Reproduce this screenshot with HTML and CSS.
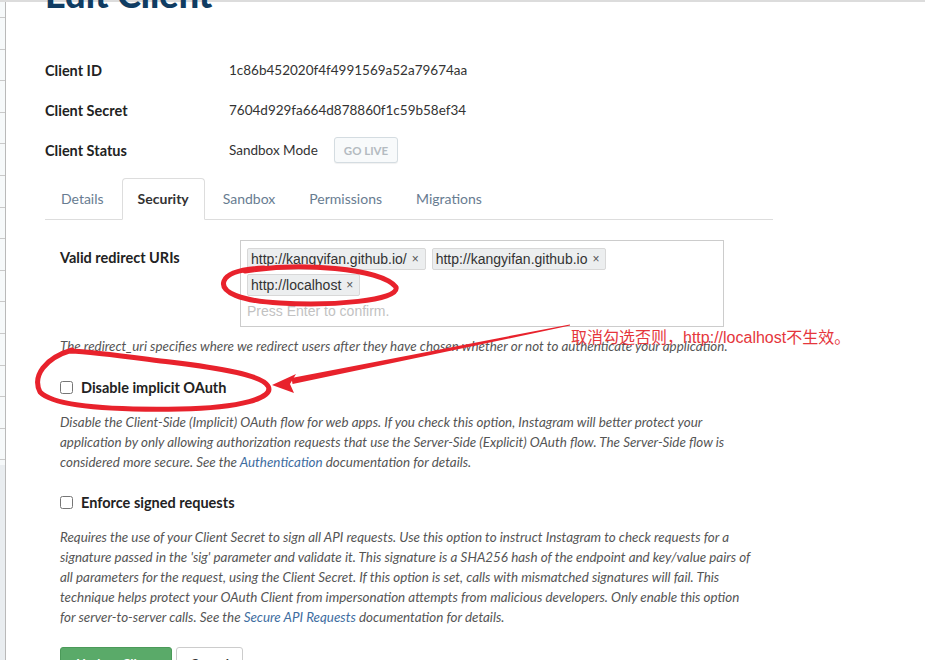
FILE: index.html
```html
<!DOCTYPE html>
<html lang="en">
<head>
<meta charset="utf-8">
<title>Edit Client</title>
<link rel="stylesheet" href="styles.css">
</head>
<body>
<div class="page">
  <div class="sidebar">
    <div class="sheet"></div>
    <div class="sheet-foot"></div>
  </div>
  <main class="main">
    <h1 class="title">Edit Client</h1>
    <dl class="info">
      <div class="info-row"><dt>Client ID</dt><dd>1c86b452020f4f4991569a52a79674aa</dd></div>
      <div class="info-row"><dt>Client Secret</dt><dd>7604d929fa664d878860f1c59b58ef34</dd></div>
      <div class="info-row"><dt>Client Status</dt><dd>Sandbox Mode <button class="btn-live" type="button">GO LIVE</button></dd></div>
    </dl>
    <ul class="tabs">
      <li><a href="#">Details</a></li>
      <li class="active"><a href="#">Security</a></li>
      <li><a href="#">Sandbox</a></li>
      <li><a href="#">Permissions</a></li>
      <li><a href="#">Migrations</a></li>
    </ul>
    <div class="pane">
      <div class="field">
        <label class="field-label">Valid redirect URIs</label>
        <div class="tag-input">
          <span class="tag">http://kangyifan.github.io/<span class="tag-x">×</span></span>
          <span class="tag">http://kangyifan.github.io<span class="tag-x">×</span></span>
          <span class="tag">http://localhost<span class="tag-x">×</span></span>
          <span class="placeholder">Press Enter to confirm.</span>
        </div>
      </div>
      <p class="help help-first">The redirect_uri specifies where we redirect users after they have chosen whether or not to authenticate your application.</p>

      <label class="check"><input type="checkbox"><span>Disable implicit OAuth</span></label>
      <p class="help help-block">Disable the Client-Side (Implicit) OAuth flow for web apps. If you check this option, Instagram will better protect your<br>application by only allowing authorization requests that use the Server-Side (Explicit) OAuth flow. The Server-Side flow is<br>considered more secure. See the <a href="#">Authentication</a> documentation for details.</p>

      <label class="check check-second"><input type="checkbox"><span>Enforce signed requests</span></label>
      <p class="help help-block">Requires the use of your Client Secret to sign all API requests. Use this option to instruct Instagram to check requests for a<br>signature passed in the 'sig' parameter and validate it. This signature is a SHA256 hash of the endpoint and key/value pairs of<br>all parameters for the request, using the Client Secret. If this option is set, calls with mismatched signatures will fail. This<br>technique helps protect your OAuth Client from impersonation attempts from malicious developers. Only enable this option<br>for server-to-server calls. See the <a href="#">Secure API Requests</a> documentation for details.</p>

      <div class="actions">
        <button class="btn btn-primary" type="button">Update Client</button>
        <button class="btn btn-default" type="button">Cancel</button>
      </div>
    </div>
  </main>
</div>

<svg class="annot" width="925" height="660" viewBox="0 0 925 660" aria-hidden="true">
  <path class="annot-stroke" d="M 245 271 C 300 262, 380 268, 396 287 C 400 301, 330 306, 280 303 C 240 301, 220 292, 224 281 C 227 273, 240 269, 264 268"/>
  <path class="annot-stroke" d="M 72 350 C 45 358, 32 376, 40 392 C 55 408, 120 410, 180 409 C 240 408, 275 398, 268 386 C 262 375, 220 368, 170 362 C 130 357, 95 352, 70 351"/>
  <polygon class="annot-fill" points="292.6,383.9 570.1,325.6 569.9,324.4 291.4,378.1"/>
  <polygon class="annot-fill" points="272,385 296,374 290,384 294,393"/>
</svg>
<div class="annot-note">取消勾选否则，http://localhost不生效。</div>
</body>
</html>
```

FILE: styles.css
```css
* {
  box-sizing: border-box;
}

html, body {
  margin: 0;
  height: 660px;
  overflow: hidden;
}

body {
  font-family: Lato, "Open Sans", sans-serif;
  color: #333;
  background: #fff;
}

.page {
  display: flex;
  border-top: 2px solid #dcdcdc;
  height: 660px;
}

.sidebar {
  width: 6px;
  flex: none;
  border-right: 1px solid #b9b9b9;
  display: flex;
  flex-direction: column;
}

.sheet {
  height: 463px;
  background: repeating-linear-gradient(to bottom, #f6f9fa 0, #f6f9fa 15px, #c9c9c9 15px, #c9c9c9 16px, #f6f9fa 16px, #f6f9fa 31.6px);
}

.sheet-foot {
  flex: 1;
  background: #e9edf0;
}

.main {
  padding-left: 39px;
  width: 800px;
}

.title {
  margin: -26px 0 0;
  font-size: 36px;
  line-height: 36px;
  font-weight: 900;
  color: #103c62;
  white-space: nowrap;
}

.info {
  margin: 38px 0 0;
}

.info-row {
  display: flex;
  align-items: center;
  height: 40px;
}

.info dt {
  width: 184px;
  font-weight: 700;
  font-size: 14.5px;
  color: #222;
}

.info dd {
  margin: 0;
  font-size: 13.5px;
  color: #333;
  display: flex;
  align-items: center;
  gap: 16px;
}

.btn-live {
  height: 26px;
  padding: 0 9px;
  border: 1px solid #d4dce1;
  border-radius: 3px;
  background: #f8fafb;
  color: #b4bbc1;
  font: 700 11.5px Lato, sans-serif;
  box-shadow: 0 1px 1px rgba(0, 0, 0, 0.06);
}

.tabs {
  list-style: none;
  margin: 8px 0 0;
  padding: 0;
  display: flex;
  width: 728px;
  border-bottom: 1px solid #ddd;
}

.tabs li {
  margin-right: 2px;
  margin-bottom: -1px;
}

.tabs a {
  display: block;
  padding: 10px 15px;
  line-height: 20px;
  border: 1px solid transparent;
  border-radius: 4px 4px 0 0;
  color: #687c91;
  font-size: 14px;
  text-decoration: none;
}

.tabs .active a {
  border-color: #ddd #ddd transparent;
  background: #fff;
  color: #333;
  font-weight: 700;
}

.pane {
  padding: 20px 0 0 15px;
}

.field {
  display: flex;
  align-items: flex-start;
}

.field-label {
  width: 180px;
  padding-top: 9px;
  line-height: 18px;
  font-weight: 700;
  font-size: 14.5px;
  color: #222;
}

.tag-input {
  width: 484px;
  border: 1px solid #ccc;
  padding: 7px 6px 5px;
  display: flex;
  flex-wrap: wrap;
  gap: 4px 6px;
  font-family: "Liberation Sans", Arial, sans-serif;
  font-size: 14px;
}

.tag {
  display: inline-flex;
  align-items: center;
  height: 22px;
  padding: 0 6px 0 3px;
  background: #eceeef;
  border: 1px solid #d8d8d8;
  border-radius: 2px;
  color: #333;
}

.tag-x {
  margin-left: 5px;
  font-size: 12px;
  color: #555;
}

.placeholder {
  width: 100%;
  padding-top: 1px;
  line-height: 20px;
  color: #c2c2c2;
}

.help {
  margin: 0;
  font-style: italic;
  font-size: 13.4px;
  line-height: 20px;
  color: #555;
  white-space: nowrap;
}

.help a {
  color: #3e6d9f;
  text-decoration: none;
}

.help-first {
  margin-top: 9px;
}

.help-block {
  margin-top: 15px;
}

.check {
  display: flex;
  align-items: center;
  gap: 8px;
  height: 20px;
  margin-top: 21px;
  font-weight: 700;
  font-size: 14.5px;
  color: #222;
}

.check input {
  margin: 0;
  width: 13px;
  height: 13px;
}

.check-second {
  margin-top: 20px;
}

.actions {
  display: flex;
  gap: 4px;
  margin-top: 20px;
}

.btn {
  height: 34px;
  padding: 0 12px;
  border-radius: 3px;
  font: 700 13px Lato, sans-serif;
}

.btn-primary {
  width: 112px;
  background: #5aaa69;
  border: 1px solid #4b9a59;
  color: #fff;
}

.btn-default {
  width: 67px;
  background: #fff;
  border: 1px solid #ccc;
  color: #333;
}

.annot {
  position: absolute;
  top: 0;
  left: 0;
  pointer-events: none;
}

.annot-stroke {
  fill: none;
  stroke: #e8222c;
  stroke-width: 5;
  stroke-linecap: round;
  stroke-linejoin: round;
}

.annot-fill {
  fill: #e8222c;
}

.annot-note {
  position: absolute;
  left: 571px;
  top: 327px;
  font-family: "Liberation Sans", "Noto Sans CJK SC", sans-serif;
  font-size: 16px;
  line-height: 22px;
  color: #e5363c;
  white-space: nowrap;
}
```
